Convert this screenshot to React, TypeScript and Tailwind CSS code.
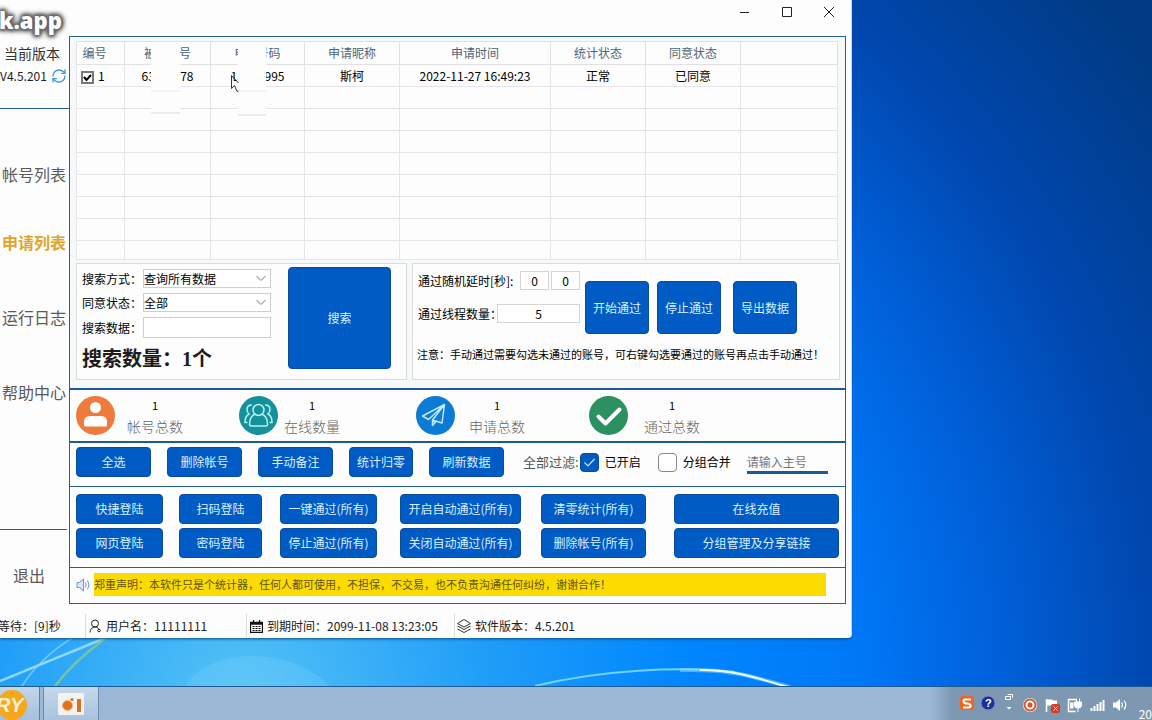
import { useState } from "react";
import { RefreshCw } from "lucide-react";
import clsx from "clsx";

const navItems = ["帐号列表", "申请列表", "运行日志", "帮助中心"];

const columns = [
  { width: "w-[48px]", label: "编号" },
  { width: "w-[86px]", label: <MaskedText head="被" tail="号" headWidth="w-[7px]" gap="gap-[28px]" /> },
  { width: "w-[94px]", label: <MaskedText head="申" tail="号码" headWidth="w-[4px]" gap="gap-[18px]" /> },
  { width: "w-[95px]", label: "申请昵称" },
  { width: "w-[151px]", label: "申请时间" },
  { width: "w-[95px]", label: "统计状态" },
  { width: "w-[95px]", label: "同意状态" },
  { width: "", label: "" },
];

const stats = [
  { label: "帐号总数", value: 1, gap: "gap-3", icon: <AccountIcon /> },
  { label: "在线数量", value: 1, gap: "gap-[6px]", icon: <OnlineIcon /> },
  { label: "申请总数", value: 1, gap: "gap-[14px]", icon: <PlaneIcon /> },
  { label: "通过总数", value: 1, gap: "gap-4", icon: <PassedIcon /> },
];

const rowActions = [
  { label: "全选", width: "w-[75px]" },
  { label: "删除帐号", width: "w-[75px]" },
  { label: "手动备注", width: "w-[75px]" },
  { label: "统计归零", width: "w-[64px]" },
  { label: "刷新数据", width: "w-[75px]" },
];

const bulkActions = [
  { label: "快捷登陆", width: "w-[87px]" },
  { label: "扫码登陆", width: "w-[83px]" },
  { label: "一键通过(所有)", width: "w-[97px]" },
  { label: "开启自动通过(所有)", width: "w-[121px]" },
  { label: "清零统计(所有)", width: "w-[105px]" },
  { label: "在线充值", width: "w-full" },
  { label: "网页登陆", width: "w-[87px]" },
  { label: "密码登陆", width: "w-[83px]" },
  { label: "停止通过(所有)", width: "w-[97px]" },
  { label: "关闭自动通过(所有)", width: "w-[121px]" },
  { label: "删除帐号(所有)", width: "w-[105px]" },
  { label: "分组管理及分享链接", width: "w-full" },
];

export default function App() {
  return (
    <div className="flex min-h-screen flex-col overflow-hidden bg-[radial-gradient(circle_at_240px_700px,#55c3f5_0px,#1f9df8_250px,#0086ff_450px,#0078f6_620px,#0062dc_750px,#0048b0_910px,#003a82_1120px)] font-['Noto_Sans_CJK_SC',sans-serif] text-xs text-black">
      <main className="flex flex-1 flex-col">
        <AppWindow />
        <Wallpaper />
      </main>
      <Taskbar />
    </div>
  );
}

function AppWindow() {
  return (
    <div className="relative mr-[301px] rounded-br bg-[#fdfdfd] shadow-[1px_0_0_#bcdcf5,0_1px_3px_#0b4a80]">
      <span className="absolute top-1 -left-px font-['Open_Sans',sans-serif] text-[22px] leading-8 font-extrabold text-white [text-shadow:0_0_2px_#666,0_0_3px_#666,0_0_4px_#666,0_0_4px_#666,0_0_5px_#666,0_0_5px_#666,0_0_6px_#777,0_0_6px_#777,0_0_7px_#888]">
        k.app
      </span>
      <div className="flex">
        <Sidebar />
        <div className="min-w-0 flex-1 pr-[5px]">
          <TitleBar />
          <div className="border border-[#24618c]">
            <section className="bg-[#f6f9fa] pt-1 pr-[5px] pb-2 pl-[6px]">
              <RequestTable />
              <div className="mt-[3px] flex gap-[5px]">
                <SearchPanel />
                <PassPanel />
              </div>
            </section>
            <StatsRow />
            <ActionRow />
            <div className="grid grid-cols-[103px_101px_120px_141px_133px_1fr] gap-y-1 border-t border-[#24618c] pt-[7px] pr-[6px] pb-[9px] pl-[6px]">
              {bulkActions.map((action) => (
                <BlueButton key={action.label} className={clsx("h-[30px]", action.width)}>
                  {action.label}
                </BlueButton>
              ))}
            </div>
            <div className="flex items-center gap-1 border-t border-[#24618c] pt-[5px] pr-[19px] pb-[7px] pl-[6px]">
              <SpeakerIcon />
              <p className="flex-1 bg-[#fcdc00] text-[11px] leading-[23px] whitespace-nowrap text-[#5f5412]">
                郑重声明：本软件只是个统计器，任何人都可使用，不担保，不交易，也不负责沟通任何纠纷，谢谢合作！
              </p>
            </div>
          </div>
        </div>
      </div>
      <StatusBar />
    </div>
  );
}

function TitleBar() {
  return (
    <div className="-mr-1 flex h-9 items-start justify-end">
      <button type="button" aria-label="最小化" className="flex h-6 w-[42px] items-center justify-center">
        <svg width="10" height="10" stroke="#222" fill="none">
          <path d="M0 5.5h9" />
        </svg>
      </button>
      <button type="button" aria-label="最大化" className="flex h-6 w-[42px] items-center justify-center">
        <svg width="10" height="10" stroke="#222" fill="none">
          <path d="M.5.5h9v9h-9z" />
        </svg>
      </button>
      <button type="button" aria-label="关闭" className="flex h-6 w-[42px] items-center justify-center">
        <svg width="10" height="10" stroke="#222" fill="none">
          <path d="M0 0l10 10M10 0L0 10" />
        </svg>
      </button>
    </div>
  );
}

function Sidebar() {
  const [active, setActive] = useState("申请列表");

  return (
    <aside className="flex w-[69px] shrink-0 flex-col whitespace-nowrap text-[#5a5a5a]">
      <div className="border-b border-[#24618c] pt-[43px] pb-[22px]">
        <p className="pl-1 text-sm leading-5 text-[#333]">当前版本</p>
        <p className="mt-[3px] flex items-center justify-between pr-[2px] leading-5 text-[#222]">
          V4.5.201
          <RefreshCw className="h-4 w-4 text-[#3d9bd8]" aria-hidden="true" />
        </p>
      </div>
      <nav className="flex flex-col pt-[34px]">
        {navItems.map((item) => (
          <button
            key={item}
            type="button"
            onClick={() => setActive(item)}
            className={clsx(
              "h-[75px] pl-[2px] text-left text-base first:h-[61px]",
              item === active && "font-bold text-[#e0a526]",
            )}
          >
            {item}
          </button>
        ))}
      </nav>
      <button
        type="button"
        className="mt-auto mr-[2px] h-[75px] border-t border-[#24618c] pt-4 pl-[13px] text-left text-base"
      >
        退出
      </button>
    </aside>
  );
}

function RequestTable() {
  return (
    <div className="relative mr-[2px]">
      <table className="w-full table-fixed border-collapse bg-[#fdfdfd] text-center leading-4">
        <thead>
          <tr className="h-[23px] text-[#4f6475]">
            {columns.map((column, i) => (
              <th
                key={i}
                className={clsx(
                  "border border-[#e2e0e2] p-0 font-normal first:pr-3",
                  column.width,
                )}
              >
                {column.label}
              </th>
            ))}
          </tr>
        </thead>
        <tbody>
          <tr className="h-[22px]">
            <td className={cellClass}>
              <label className="flex items-center gap-1 pl-1">
                <span className="relative top-[2px] flex h-[13px] w-[13px]">
                  <input
                    type="checkbox"
                    defaultChecked
                    className="peer h-[13px] w-[13px] appearance-none border-2 border-[#777] bg-white"
                  />
                  <svg
                    viewBox="0 0 13 13"
                    className="pointer-events-none absolute inset-0 hidden peer-checked:block"
                    fill="none"
                    stroke="#000"
                    strokeWidth="2"
                  >
                    <path d="M3 6l2.5 3L10 4" />
                  </svg>
                </span>
                1
              </label>
            </td>
            <td className={cellClass}>
              <MaskedText head="63" tail="578" headWidth="w-[10px]" gap="gap-[22px]" />
            </td>
            <td className={cellClass}>
              <MaskedText head="15" tail="995" headWidth="w-[8px]" gap="gap-[26px]" />
            </td>
            <td className={cellClass}>斯柯</td>
            <td className={cellClass}>2022-11-27 16:49:23</td>
            <td className={cellClass}>正常</td>
            <td className={cellClass}>已同意</td>
            <td className={cellClass} />
          </tr>
          {Array.from({ length: 8 }, (_, row) => (
            <tr key={row} className="h-[22px] last:h-[19px]">
              {columns.map((_, i) => (
                <td key={i} className={cellClass} />
              ))}
            </tr>
          ))}
        </tbody>
      </table>

      {/* hidden part of the account numbers */}
      <div className="absolute top-1 left-[75px] h-[69px] w-[29px] border-b-2 border-[#ececec] bg-[#fdfdfd] pt-[45px]">
        <div className="border-b-2 border-[#f2f2f2]" />
      </div>
      <div className="absolute top-1 left-[162px] h-[71px] w-[28px] border-b-2 border-[#ececec] bg-[#fdfdfd] pt-[45px]">
        <div className="border-b-2 border-[#f2f2f2]" />
      </div>
      <svg className="absolute top-[34px] left-[155px]" width="8" height="18" fill="#fff" stroke="#333">
        <path d="M.5.5v13l3-3 2.500 6 1.500-.5M.5.500l7 7.500" />
      </svg>
    </div>
  );
}

const cellClass = "border border-[#e6e4e6] p-0";

function MaskedText({
  head,
  tail,
  headWidth,
  gap,
}: {
  head: string;
  tail: string;
  headWidth: string;
  gap: string;
}) {
  return (
    <span className={clsx("flex justify-center whitespace-nowrap", gap)}>
      <span className={clsx("text-left", headWidth)}>{head}</span>
      <span>{tail}</span>
    </span>
  );
}

function SearchPanel() {
  return (
    <form
      className="flex w-[331px] shrink-0 items-start gap-[17px] border border-[#dcdcdc] bg-[#fdfdfd] pl-[5px]"
      onSubmit={(e) => e.preventDefault()}
    >
      <div className="w-[189px] pt-[5px] pb-[6px]">
        <div className="flex flex-col gap-[5px]">
          <SelectField id="search-mode" label="搜索方式：" options={["查询所有数据"]} />
          <SelectField id="agree-state" label="同意状态：" options={["全部"]} />
          <div className="flex h-[21px] items-center">
            <label htmlFor="search-data" className="w-[61px] whitespace-nowrap">
              搜索数据：
            </label>
            <input
              id="search-data"
              type="text"
              className="h-full min-w-0 flex-1 border border-[#cfcfcf] bg-white px-1 outline-none"
            />
          </div>
        </div>
        <p className="mt-[7px] font-['Liberation_Serif','Noto_Sans_CJK_SC',serif] text-xl leading-7 font-bold whitespace-nowrap text-[#1c1c1c]">
          搜索数量：1个
        </p>
      </div>
      <BlueButton type="submit" className="mt-[3px] h-[102px] w-[103px]">
        搜索
      </BlueButton>
    </form>
  );
}

function SelectField({ id, label, options }: { id: string; label: string; options: string[] }) {
  return (
    <div className="flex h-[19px] items-center">
      <label htmlFor={id} className="w-[61px] whitespace-nowrap">
        {label}
      </label>
      <div className="relative h-full flex-1">
        <select
          id={id}
          className="block h-full w-full appearance-none border border-[#cfcfcf] bg-white leading-4 outline-none"
        >
          {options.map((option) => (
            <option key={option}>{option}</option>
          ))}
        </select>
        <svg
          className="pointer-events-none absolute top-[6px] right-[5px]"
          width="10"
          height="7"
          fill="none"
          stroke="#777"
        >
          <path d="M.5 1L5 5.500 9.500 1" />
        </svg>
      </div>
    </div>
  );
}

function PassPanel() {
  return (
    <div className="min-w-0 flex-1 border border-[#dcdcdc] bg-[#fdfdfd]">
      <div className="flex items-start pl-[5px]">
        <div className="flex w-[162px] flex-col gap-[14px] pt-[7px] whitespace-nowrap">
          <div className="flex h-[19px] items-center gap-[2px]">
            <label htmlFor="delay-min" className="flex-1">
              通过随机延时[秒]:
            </label>
            <input id="delay-min" className={numberClass} defaultValue="0" />
            <input aria-label="通过随机延时" className={numberClass} defaultValue="0" />
          </div>
          <div className="flex h-[19px] items-center">
            <label htmlFor="threads" className="w-[79px]">
              通过线程数量：
            </label>
            <input
              id="threads"
              className="h-full min-w-0 flex-1 border border-[#d5d5d5] bg-white text-center outline-none"
              defaultValue="5"
            />
          </div>
        </div>
        <BlueButton className="mt-[17px] ml-[5px] h-[53px] w-16">开始通过</BlueButton>
        <BlueButton className="mt-[17px] ml-2 h-[53px] w-16">停止通过</BlueButton>
        <BlueButton className="mt-[17px] ml-3 h-[53px] w-16">导出数据</BlueButton>
      </div>
      <p className="mt-3 pl-1 text-[11px] leading-4 whitespace-nowrap">
        注意：手动通过需要勾选未通过的账号，可右键勾选要通过的账号再点击手动通过！
      </p>
    </div>
  );
}

const numberClass = "h-full w-[29px] border border-[#d5d5d5] bg-white text-center outline-none";

function StatsRow() {
  return (
    <div className="grid grid-cols-[163px_177px_173px_1fr] border-y-2 border-[#1b5a96] pl-[6px]">
      {stats.map((stat) => (
        <div key={stat.label} className={clsx("flex h-[51px] items-center", stat.gap)}>
          {stat.icon}
          <div className="text-center leading-[21px]">
            <p className="text-[11px]">{stat.value}</p>
            <p className="text-sm leading-[21px] font-light text-[#666]">{stat.label}</p>
          </div>
        </div>
      ))}
    </div>
  );
}

function ActionRow() {
  return (
    <div className="flex h-[43px] items-start gap-4 pt-1 pl-[6px] whitespace-nowrap">
      {rowActions.map((action) => (
        <BlueButton key={action.label} className={clsx("h-[30px]", action.width)}>
          {action.label}
        </BlueButton>
      ))}
      <div className="flex h-[30px] items-center pl-[3px]">
        <span className="text-[13px] text-[#555]">全部过滤:</span>
        <Checkbox label="已开启" defaultChecked />
      </div>
      <Checkbox label="分组合并" className="h-[30px]" />
      <input
        aria-label="主号"
        placeholder="请输入主号"
        className="h-[27px] w-[81px] border-b-[3px] border-[#1b5a96] pt-1 outline-none placeholder:text-[#777]"
      />
    </div>
  );
}

function Checkbox({
  label,
  className,
  ...props
}: React.InputHTMLAttributes<HTMLInputElement> & { label: string }) {
  return (
    <label className={clsx("flex items-center gap-[6px] pl-[1px]", className)}>
      <span className="relative flex h-[19px] w-[19px]">
        <input
          type="checkbox"
          className="peer h-[19px] w-[19px] appearance-none rounded border border-[#888] bg-white checked:border-[#0a4c9c] checked:bg-[#005bc0]"
          {...props}
        />
        <svg
          viewBox="0 0 19 19"
          className="pointer-events-none absolute inset-0 hidden peer-checked:block"
          fill="none"
          stroke="#cfe6ff"
          strokeWidth="1.2"
        >
          <path d="M4.500 9.500l3.500 3.500 6.500-7" />
        </svg>
      </span>
      {label}
    </label>
  );
}

function BlueButton({
  className,
  type = "button",
  ...props
}: React.ButtonHTMLAttributes<HTMLButtonElement>) {
  return (
    <button
      type={type}
      className={clsx(
        "shrink-0 rounded border border-[#0a4c9c] bg-[#005bc5] text-center leading-4 whitespace-nowrap text-[#d9f1ff]",
        className,
      )}
      {...props}
    />
  );
}

function StatusBar() {
  return (
    <footer className="flex h-[34px] items-start pt-[10px] leading-6 whitespace-nowrap text-[#222]">
      <span className="-ml-[2px] w-[87px]">等待：[9]秒</span>
      <span className="flex w-[161px] items-center gap-1 border-l border-[#ddd] pl-[3px]">
        <svg width="13" height="14" viewBox="0 0 13 14" fill="none" stroke="#222">
          <circle cx="6" cy="4.500" r="3.500" />
          <path d="M1 13.500c0-3 2-5.500 5-5.500 1.500 0 2.500.5 3.500 1.500" />
          <circle cx="10" cy="11.500" r="1.300" />
        </svg>
        用户名：11111111
      </span>
      <span className="flex w-[208px] items-center gap-1 border-l border-[#ddd] pl-[3px]">
        <svg width="13" height="13" viewBox="0 0 13 13" fill="none" stroke="#111">
          <path d="M.5 2.500h12v10H.5zM.5 4h12M3.500 0v3M9.500 0v3" strokeWidth="1.300" />
          <path d="M2.500 6.500h8M2.500 8.500h8M2.500 10.500h8" strokeDasharray="2 1" strokeWidth="1.200" />
        </svg>
        到期时间：2099-11-08 13:23:05
      </span>
      <span className="flex items-center gap-1 border-l border-[#ddd] pl-[2px]">
        <svg width="14" height="14" viewBox="0 0 14 14" fill="none" stroke="#333">
          <path d="M7 .5l6.500 4L7 8 .5 4.500zM.5 7L7 10.500 13.500 7M.5 10L7 13.500l6.500-3.500" />
        </svg>
        软件版本：4.5.201
      </span>
    </footer>
  );
}

function Wallpaper() {
  return (
    <svg className="h-12 w-full flex-1" viewBox="0 0 1152 48" preserveAspectRatio="none" fill="none">
      <path d="M185 48C210 8 290 8 330 48z" fill="#8fdcff" opacity=".2" />
      <path d="M0 43L105 0" stroke="#a9e6ff" strokeWidth="2.500" opacity=".8" />
      <path d="M22 48Q40 20 72 0" stroke="#8fd8fa" strokeWidth="1.500" opacity=".7" />
      <path d="M55 48Q75 22 106 0" stroke="#8cc98c" strokeWidth="2.500" opacity=".8" />
      <path d="M535 48C600 32 680 28 735 34" stroke="#6fd4ff" strokeWidth="2" />
      <path d="M680 32C725 31 745 36 790 49" stroke="#8fe0ff" strokeWidth="4" opacity=".5" />
      <path d="M700 32C730 32 748 37 788 49" stroke="#f2fdff" strokeWidth="2" />
    </svg>
  );
}

function Taskbar() {
  return (
    <div className="flex h-[34px] items-stretch overflow-hidden border-t border-[#1c5a92] bg-[#9bb8d6]">
      <button
        type="button"
        aria-label="RY"
        className="flex w-10 items-center border-r border-[#5f7c9c] bg-linear-to-b from-[#c3d6ea] to-[#a5c0dc]"
      >
        <svg width="28" height="32" viewBox="0 0 28 32">
          <circle cx="12" cy="17" r="15" fill="#f5a81c" />
          <text
            x="-4"
            y="24"
            fill="#fdf0cf"
            fontFamily="Liberation Sans"
            fontWeight="bold"
            fontStyle="italic"
            fontSize="20"
          >
            RY
          </text>
        </svg>
      </button>
      <button
        type="button"
        aria-label="录屏"
        className="ml-[3px] flex w-14 items-center justify-center border-x border-[#6c89a8] bg-linear-to-b from-[#c6d8ea] to-[#a9c2dd]"
      >
        <svg width="28" height="24" viewBox="0 0 28 24">
          <rect x="1" y="1" width="26" height="22" rx="1" fill="#f4f2f0" />
          <circle cx="10.500" cy="13.500" r="5" fill="#e0701e" stroke="#f3b68a" />
          <circle cx="15" cy="7.500" r="1.500" fill="#e0701e" />
          <rect x="20" y="7" width="4" height="13" fill="#e0701e" />
        </svg>
      </button>
      <div className="ml-auto flex w-[222px] shrink-0 items-center bg-linear-to-r from-[#9bb8d6] to-[#7f98b2] to-10% pl-[29px] text-xs text-white">
        <svg width="172" height="22" viewBox="0 0 172 22" fill="none" aria-hidden="true">
          {/* input method */}
          <rect x="1" y="3" width="14" height="14" rx="3" fill="#f0651f" />
          <path d="M12 6.500H6.500Q4 6.500 4.500 8.500T8 10.500t3.500 2-2.500 2H4" stroke="#fff" strokeWidth="2.200" />
          {/* help */}
          <circle cx="29" cy="10" r="7" fill="#1c2f9c" stroke="#7d90cc" />
          <text x="26" y="14" fill="#fff" fontSize="11" fontWeight="bold" fontFamily="Liberation Sans">
            ?
          </text>
          {/* restore */}
          <path d="M48.500 1.500h5v3M46.500 3.500h5v3h-5z" stroke="#fff" />
          <path d="M47.500 14h5l-2.500 2.500z" fill="#fff" />
          {/* recorder */}
          <circle cx="71" cy="12" r="7" fill="#fff" />
          <circle cx="71" cy="12" r="5.500" stroke="#d9532c" strokeWidth="2" />
          <circle cx="71" cy="12" r="2.500" fill="#d9532c" />
          {/* action centre */}
          <path d="M87.500 6v13" stroke="#fff" strokeWidth="1.500" />
          <path d="M88 6.500h5l1 1h4v6h-5l-1-1h-4z" fill="#fff" />
          <rect x="92" y="11" width="9" height="9" rx="2" fill="#d43c2a" />
          <path d="M94.500 13.500l4 4M98.500 13.500l-4 4" stroke="#fff" />
          {/* power */}
          <path d="M114 6.500h-4.500v12h7M114 6.500h3" stroke="#fff" strokeWidth="1.500" />
          <path d="M111 9.500h3.500v6H111z" fill="#fff" />
          <path d="M115.500 9h7v3.500q0 2.500-3.500 2.500t-3.500-2.500zM117.500 5.500V9M120.500 5.500V9M119 15v4" fill="#fff" stroke="#fff" />
          {/* network */}
          <path d="M132.500 15v3M135.500 13v5M138.500 11v7M141.500 9v9M144.500 7v11" stroke="#fff" strokeWidth="2" />
          {/* volume */}
          <path d="M154 9.500h3l4-3.500v12l-4-3.500h-3z" fill="#fff" />
          <path d="M162.500 9.500q2 2.500 0 5M165 7.500q3.500 4.500 0 9" stroke="#fff" strokeWidth="1.200" />
        </svg>
        <span className="ml-auto pt-5 whitespace-nowrap">20</span>
      </div>
    </div>
  );
}

function AccountIcon() {
  return (
    <svg width="39" height="39" viewBox="0 0 39 39" className="shrink-0">
      <circle cx="19.500" cy="19.500" r="19.500" fill="#ef7a3e" />
      <circle cx="19.500" cy="11.500" r="5.500" fill="#fff" />
      <path d="M8 29v-3q0-6 6-6h11q6 0 6 6v3q0 1.500-1.500 1.500h-20Q8 30.500 8 29z" fill="#fff" />
    </svg>
  );
}

function OnlineIcon() {
  return (
    <svg width="39" height="39" viewBox="0 0 39 39" fill="none" className="shrink-0">
      <circle cx="19.500" cy="19.500" r="19.500" fill="#14919b" />
      <g stroke="#b9f0f0" strokeWidth="1.500">
        <circle cx="19.500" cy="14" r="5.500" />
        <path d="M10.500 28.500q0-8.500 6-10.500M28.500 28.500q0-8.500-6-10.500M10.500 28.500q0 1.500 2 1.500h14q2 0 2-1.500" />
        <path d="M13 9q-5 0-5 4.500 0 2.500 2 4.500-4 2-4 8.500h2.500M26 9q5 0 5 4.500 0 2.500-2 4.500 4 2 4 8.500h-2.500" />
      </g>
    </svg>
  );
}

function PlaneIcon() {
  return (
    <svg width="39" height="39" viewBox="0 0 39 39" fill="none" className="shrink-0">
      <circle cx="19.500" cy="19.500" r="19.500" fill="#0b7bd6" />
      <path
        d="M28.500 8.500L6.500 20l6 3.500zM28.500 8.500L16.500 24l9.500 3zM16.500 24v5.500l3.500-4"
        stroke="#bfe9ff"
        strokeWidth="1.500"
        strokeLinejoin="round"
      />
    </svg>
  );
}

function PassedIcon() {
  return (
    <svg width="39" height="39" viewBox="0 0 39 39" fill="none" className="shrink-0">
      <circle cx="19.500" cy="19.500" r="19.500" fill="#2c9160" />
      <path d="M9.500 20.500l7 7 14-14" stroke="#fff" strokeWidth="4" strokeLinecap="round" strokeLinejoin="round" />
    </svg>
  );
}

function SpeakerIcon() {
  return (
    <svg width="14" height="14" viewBox="0 0 14 14" fill="none" stroke="#6f93cc" className="shrink-0">
      <path d="M1 4.500h2.500L7.500 1v12L3.500 9.500H1z" fill="#dbe6f6" />
      <path d="M9.500 4.500q1.500 2.500 0 5M11.500 2.500q3 4.500 0 9" />
    </svg>
  );
}
